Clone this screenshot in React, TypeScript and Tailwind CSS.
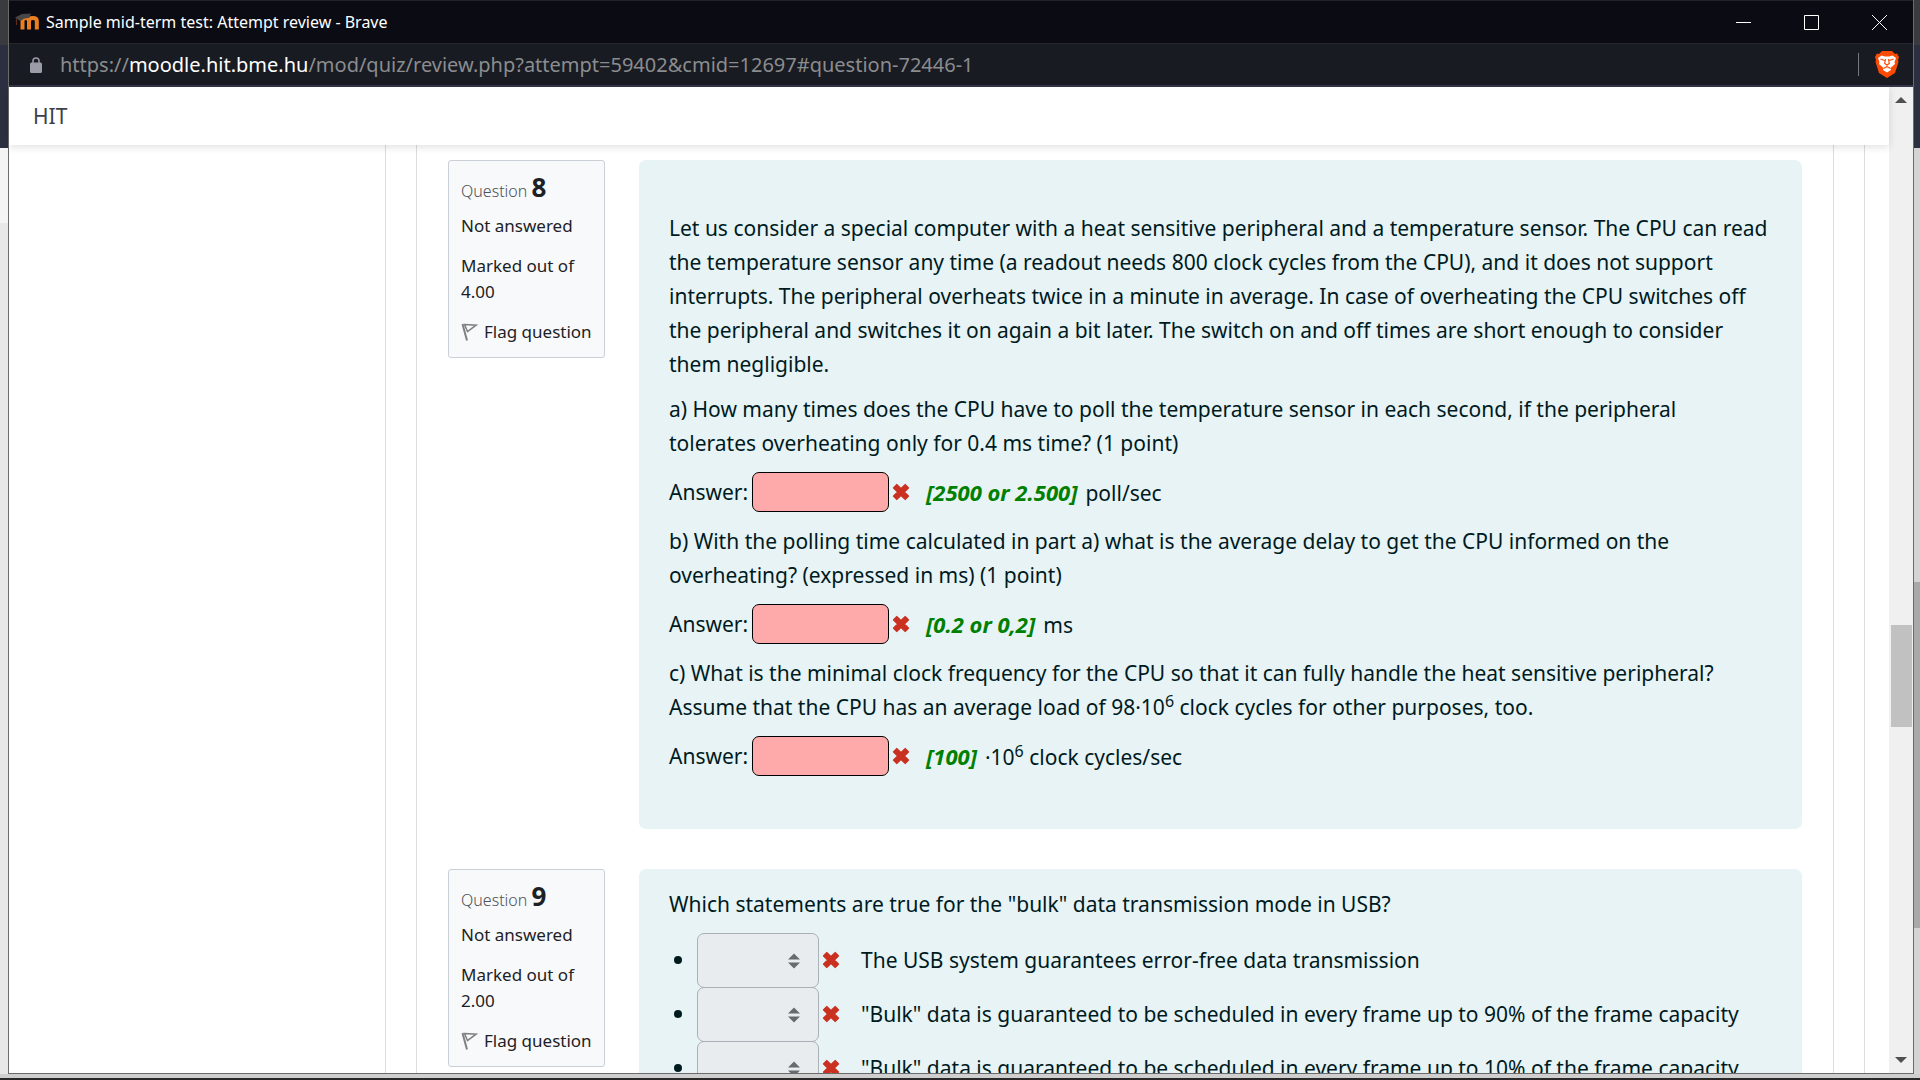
import React from "react";

function Cross() {
  return (
    <svg viewBox="0 0 18 18" className="h-[18px] w-[18px] shrink-0" role="img" aria-label="Incorrect">
      <path
        d="M1.800 4.800 4.800 1.800 9 5.800 13.200 1.800 16.200 4.800 12.200 9 16.200 13.200 13.200 16.200 9 12.200 4.800 16.200 1.800 13.200 5.800 9Z"
        fill="#ca3120"
        stroke="#ca3120"
        strokeWidth="1.8"
        strokeLinejoin="round"
      />
    </svg>
  );
}

function FlagIcon() {
  return (
    <svg viewBox="0 0 17 18" className="h-[18px] w-[17px] shrink-0" fill="none" stroke="#808080" aria-hidden="true">
      <path d="M1.500 1 6 17.500" strokeWidth="2" />
      <path d="M3.500 1.600 15 2.200 6.500 8.500Z" strokeWidth="1.5" />
    </svg>
  );
}

function MoodleIcon() {
  return (
    <svg viewBox="0 0 26 24" className="h-6 w-[26px] shrink-0" aria-hidden="true">
      <path
        d="M8.500 19.500V11q0-3 3.200-3t3.300 3v8.500M15 19.500V11q0-3 3.900-3t3.900 3v8.500"
        fill="none"
        stroke="#ea7f22"
        strokeWidth="4"
      />
      <path d="M1 7.500 8 4l9-.5-2 4.500Q10 7.500 6.500 11L3 9Z" fill="#4b4646" />
      <path d="M2.500 9v6" stroke="#5a2f1c" strokeWidth="1.200" />
    </svg>
  );
}

function InfoCard({ number, mark }: { number: number; mark: string }) {
  return (
    <aside className="w-[157px] shrink-0 rounded-[3px] border border-[#c9d0d8] bg-[#f8f9fa] px-3 pb-3 pt-2 text-[17px] leading-[26px] text-[#1d2125]">
      <h3 className="h-9 text-[16px] font-light leading-9 text-[#4b5258]">
        Question <span className="text-[26px] font-bold text-[#1d2125]">{number}</span>
      </h3>
      <div className="mt-2">Not answered</div>
      <div className="mt-[14px] w-32">
        Marked out of
        <br />
        {mark}
      </div>
      <button type="button" className="mt-[14px] flex items-center gap-[6px] whitespace-nowrap">
        <FlagIcon />
        Flag question
      </button>
    </aside>
  );
}

function Answer({ id, correct, children }: { id: string; correct: string; children: React.ReactNode }) {
  return (
    <div className="flex h-[42px] items-center">
      <label htmlFor={id} className="w-[83px]">
        Answer:
      </label>
      <input
        id={id}
        type="text"
        readOnly
        className="mr-[3px] h-10 w-[137px] rounded-[7px] border border-black bg-[#ffaaaa] px-3 outline-none"
      />
      <Cross />
      <span className="ml-4 flex items-baseline gap-2">
        <b className="text-[22px] font-bold italic text-[#008000]">{correct}</b>
        <span>{children}</span>
      </span>
    </div>
  );
}

function Power() {
  return <sup className="relative -top-2 align-baseline text-[16px] leading-none">6</sup>;
}

function Statement({ id, children }: { id: string; children: React.ReactNode }) {
  return (
    <li className="flex h-[54px] items-center">
      <span className="ml-[5px] mr-[15px] h-2 w-2 rounded-full bg-[#001a1e]" />
      <span className="relative mr-[3px] h-[55px] w-[122px] shrink-0">
        <select
          id={id}
          disabled
          className="h-full w-full appearance-none rounded-[7px] border border-[#a9b0b8] bg-[#e9ecef] opacity-100"
        >
          <option></option>
        </select>
        <svg
          viewBox="0 0 12 16"
          className="pointer-events-none absolute right-[19px] top-5 h-4 w-3"
          fill="#666b70"
          aria-hidden="true"
        >
          <path d="M6 0.500 12 6.500H0ZM6 15.500 12 9.500H0Z" />
        </svg>
      </span>
      <Cross />
      <label htmlFor={id} className="ml-[21px] whitespace-nowrap">
        {children}
      </label>
    </li>
  );
}

export default function App() {
  return (
    <div className="flex h-screen flex-col overflow-hidden bg-[#2b2829] font-['Noto_Sans',sans-serif]">
      <div className="flex min-h-0 flex-1">
        <div className="flex w-2 shrink-0 flex-col bg-[#e8e8e8]">
          <div className="h-[45px] bg-[#3a3b3e]" />
          <div className="h-[103px] bg-[#2b2f3f]" />
          <div className="h-[75px] bg-[#f4f4f4]" />
        </div>

        <div className="flex min-w-0 flex-1 flex-col border-b border-l border-[#6b6b6b] bg-white">
          <header className="flex h-[43px] shrink-0 items-center border-t border-[#222228] bg-[#0b0b14] pl-[5px] text-white">
            <MoodleIcon />
            <h1 className="ml-[6px] flex-1 text-[16px]">Sample mid-term test: Attempt review - Brave</h1>
            <div className="flex h-full">
              <button type="button" aria-label="Minimize" className="flex w-[68px] items-center justify-center">
                <svg viewBox="0 0 15 15" className="h-[15px] w-[15px]" stroke="currentColor">
                  <path d="M0 7.500H15" />
                </svg>
              </button>
              <button type="button" aria-label="Maximize" className="flex w-[68px] items-center justify-center">
                <svg viewBox="0 0 15 15" className="h-[15px] w-[15px]" stroke="currentColor" fill="none">
                  <path d="M.5.5h14v14H.5Z" />
                </svg>
              </button>
              <button type="button" aria-label="Close" className="flex w-[68px] items-center justify-center">
                <svg viewBox="0 0 15 15" className="h-[15px] w-[15px]" stroke="currentColor">
                  <path d="M0 0 15 15M15 0 0 15" />
                </svg>
              </button>
            </div>
          </header>

          <div className="flex h-11 shrink-0 items-center border-b-2 border-t border-b-[#34344a] border-t-[#25272e] bg-[#181b22] pl-[21px] pr-[14px]">
            <svg viewBox="0 0 12 16" className="h-4 w-3" aria-hidden="true">
              <rect y="5.500" width="12" height="10.500" rx="1.500" fill="#9b9ca8" />
              <path d="M3 6V4a3 3 0 0 1 6 0v2" fill="none" stroke="#9b9ca8" strokeWidth="1.500" />
            </svg>
            <a href="#question-72446-1" className="ml-[18px] flex-1 text-[20px] text-[#8b8c8f]">
              https://<span className="text-white">moodle.hit.bme.hu</span>
              /mod/quiz/review.php?attempt=59402&amp;cmid=12697#question-72446-1
            </a>
            <span className="mr-4 h-[23px] w-px bg-[#77787c]" />
            <button type="button" aria-label="Brave Shields" className="h-[27px] w-6">
              <svg viewBox="0 0 24 27" className="h-[27px] w-6">
                <path
                  d="M7 0h10l3 3 2-.5L24 6l-1 3 .5 2-3.500 11L12 27 4 22 .5 11 1 9 0 6 2 2.500 4 3Z"
                  fill="#fb4a04"
                />
                <path
                  d="M3 7 6.500 4.500 10 5.500h4l3.500-1L21 7l-1.500 4 .5 2-4.500 4 .5 2-4 2.500L8 19l.5-2L4 13l.5-2Z"
                  fill="#fff"
                />
                <path
                  d="m5.500 8 4 1.500M18.500 8l-4 1.500M10.500 8l-.8 4.500 2.300 1.500 2.300-1.500L13.500 8M12 14v2.500M8.500 17.500l3.500-2 3.500 2"
                  fill="none"
                  stroke="#fb4a04"
                  strokeWidth="1.200"
                />
              </svg>
            </button>
          </div>

          <div className="flex min-h-0 flex-1">
            <main className="flex min-w-0 flex-1 flex-col">
              <nav className="z-10 flex h-[58px] shrink-0 items-center bg-white px-6 pt-[2px] shadow-[0_2px_8px_rgba(0,0,0,0.12)]">
                <a href="#home" className="text-[21px] text-[#3c4248]">
                  HIT
                </a>
              </nav>
              <div className="flex min-h-0 flex-1 overflow-hidden">
                <div className="w-[377px] shrink-0 border-r border-[#dcdcdc]" />
                <div className="w-[30px] shrink-0" />
                <div className="mr-6 flex min-w-0 flex-1 border-r border-[#dcdcdc] pr-[30px]">
                  <div className="flex h-max min-w-0 flex-1 flex-col gap-10 border-x border-[#dcdcdc] px-[31px] pt-[15px] text-[21px] leading-[34px] text-[#001a1e]">
                    <section className="flex items-start gap-[34px]">
                      <InfoCard number={8} mark="4.00" />
                      <div className="min-w-0 flex-1 space-y-[11px] rounded-[7px] bg-[#e7f3f5] px-[30px] pb-[52px] pt-[51px]">
                        <p>
                          Let us consider a special computer with a heat sensitive peripheral and a temperature sensor.
                          The CPU can read
                          <br />
                          the temperature sensor any time (a readout needs 800 clock cycles from the CPU), and it does not support
                          <br />
                          interrupts. The peripheral overheats twice in a minute in average. In case of overheating the CPU
                          switches off
                          <br />
                          the peripheral and switches it on again a bit later. The switch on and off times are short enough
                          to consider
                          <br />
                          them negligible.
                        </p>
                        <p>
                          a) How many times does the CPU have to poll the temperature sensor in each second, if the
                          peripheral
                          <br />
                          tolerates overheating only for 0.4 ms time? (1 point)
                        </p>
                        <Answer id="q8a" correct="[2500 or 2.500]">
                          poll/sec
                        </Answer>
                        <p>
                          b) With the polling time calculated in part a) what is the average delay to get the CPU informed
                          on the
                          <br />
                          overheating? (expressed in ms) (1 point)
                        </p>
                        <Answer id="q8b" correct="[0.2 or 0,2]">
                          ms
                        </Answer>
                        <p>
                          c) What is the minimal clock frequency for the CPU so that it can fully handle the heat sensitive
                          peripheral?
                          <br />
                          Assume that the CPU has an average load of 98·10
                          <Power /> clock cycles for other purposes, too.
                        </p>
                        <Answer id="q8c" correct="[100]">
                          ·10
                          <Power /> clock cycles/sec
                        </Answer>
                      </div>
                    </section>
                    <section className="flex items-start gap-[34px]">
                      <InfoCard number={9} mark="2.00" />
                      <div className="min-w-0 flex-1 rounded-[7px] bg-[#e7f3f5] px-[30px] pb-[50px] pt-[18px]">
                        <p className="mb-3">Which statements are true for the "bulk" data transmission mode in USB?</p>
                        <ul>
                          <Statement id="q9a">The USB system guarantees error-free data transmission</Statement>
                          <Statement id="q9b">
                            "Bulk" data is guaranteed to be scheduled in every frame up to 90% of the frame capacity
                          </Statement>
                          <Statement id="q9c">
                            "Bulk" data is guaranteed to be scheduled in every frame up to 10% of the frame capacity
                          </Statement>
                        </ul>
                      </div>
                    </section>
                  </div>
                </div>
              </div>
            </main>
            <div className="flex w-6 shrink-0 flex-col items-center bg-[#f0f0f0] py-[10px]">
              <svg viewBox="0 0 12 6" className="h-[6px] w-3" fill="#505050" aria-hidden="true">
                <path d="M6 0 12 6H0Z" />
              </svg>
              <div className="flex w-[21px] flex-1 flex-col">
                <div className="flex-[522]" />
                <div className="flex-[102] bg-[#c1c1c1]" />
                <div className="flex-[330]" />
              </div>
              <svg viewBox="0 0 12 6" className="h-[6px] w-3" fill="#505050" aria-hidden="true">
                <path d="M6 6 12 0H0Z" />
              </svg>
            </div>
          </div>
        </div>

        <div className="flex w-[7px] shrink-0 flex-col border-l border-[#6b6b6b] bg-[#d4d4d4]">
          <div className="h-[45px] bg-[#3a3b3e]" />
          <div className="h-[103px] bg-[#2b2f3f]" />
          <div className="flex-[434]" />
          <div className="flex-[346] bg-[#a9a9a9]" />
          <div className="flex-[146]" />
        </div>
      </div>
      <div className="mb-[2px] h-1 shrink-0 bg-[#cfcfcf]" />
    </div>
  );
}
